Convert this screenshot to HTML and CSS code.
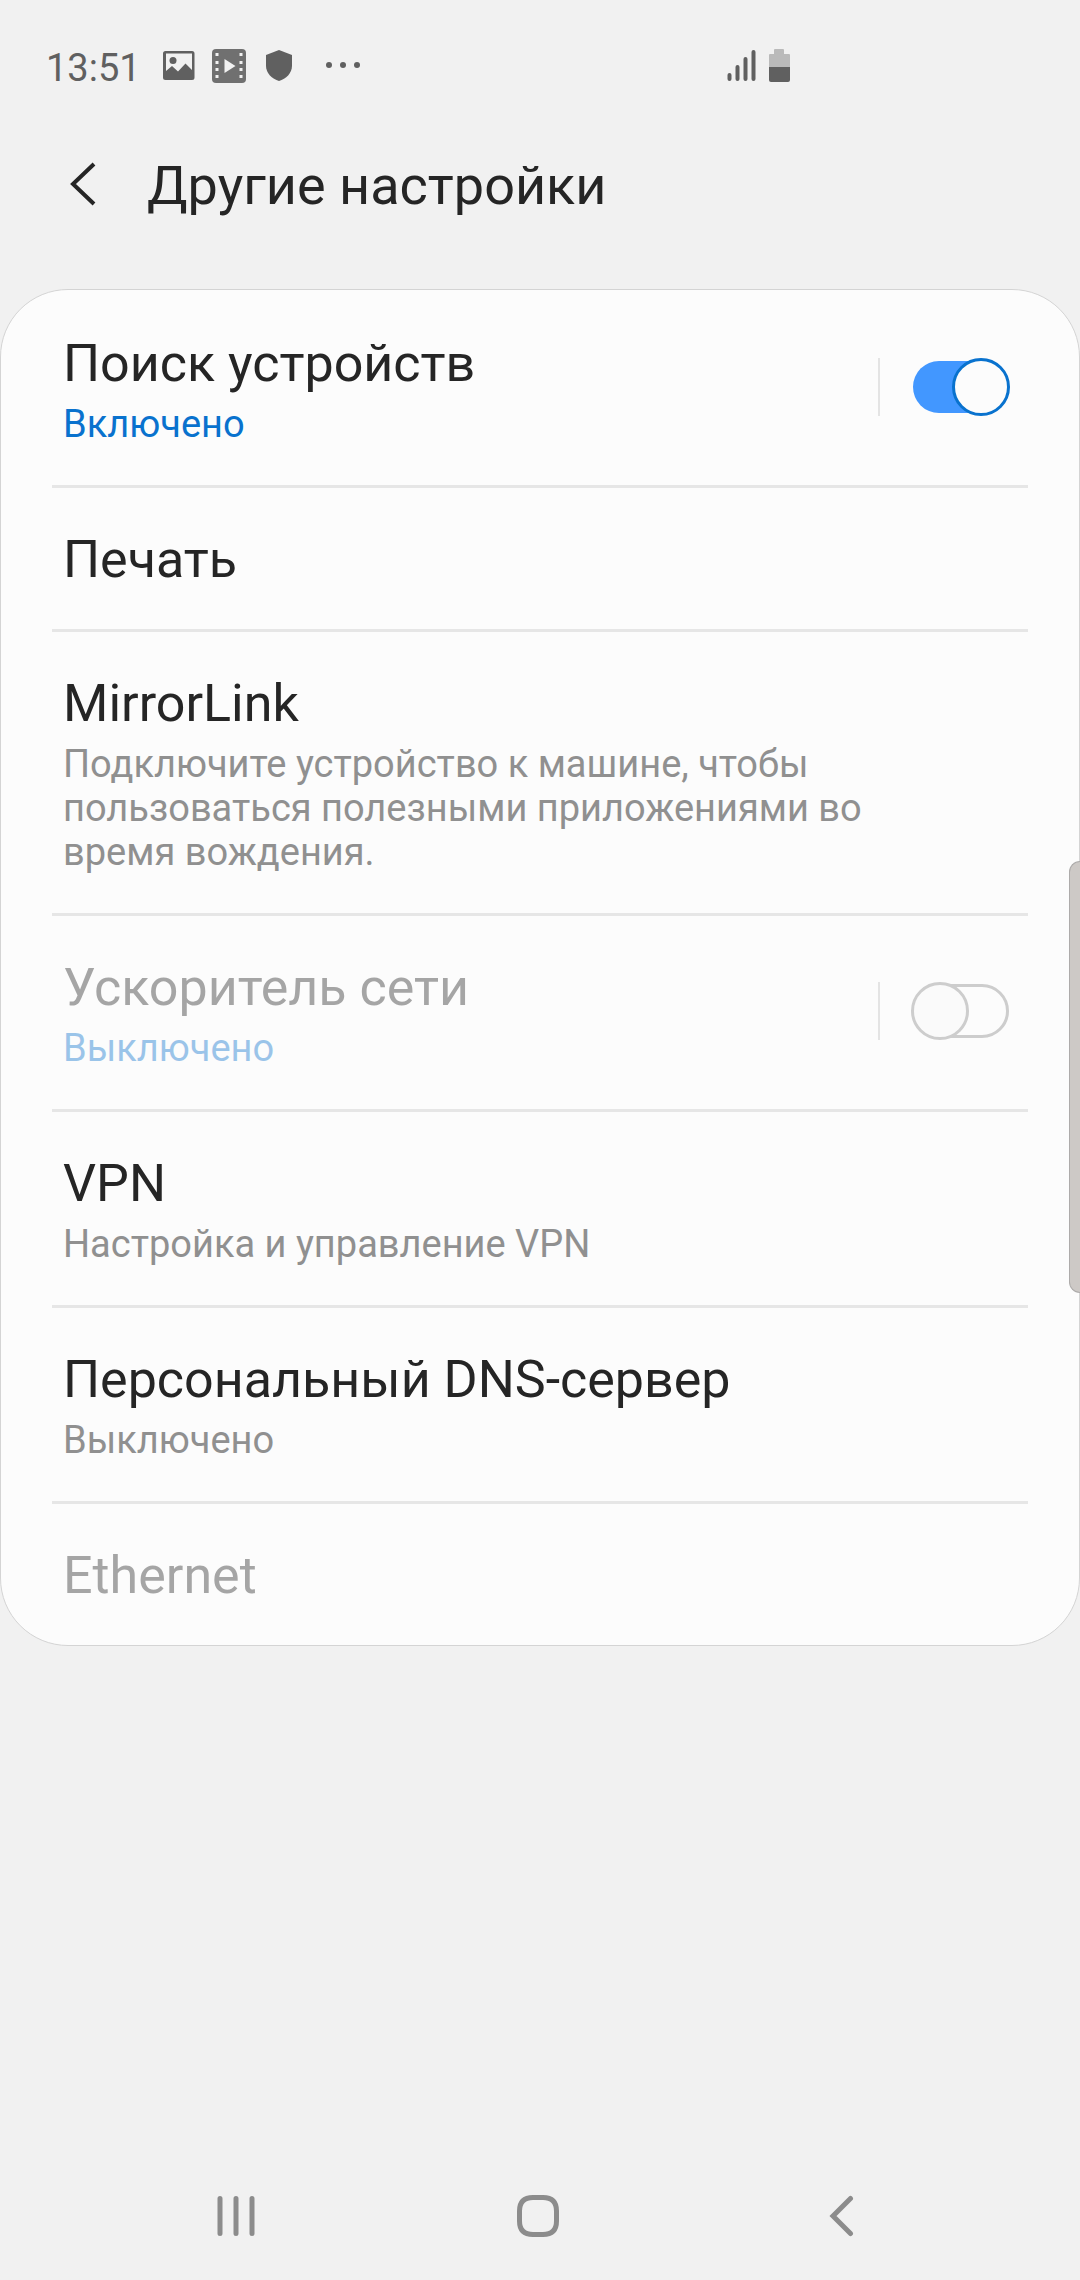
FILE: index.html
```html
<!DOCTYPE html>
<html lang="ru">
<head>
    <meta charset="utf-8">
    <meta name="viewport" content="width=device-width, initial-scale=1">
    <title>Другие настройки</title>
    <link rel="stylesheet" href="styles.css">
</head>
<body>
<div class="status">
    <span class="clock">13:51</span>
    <div class="status-icons">
        <svg width="34" height="34" viewBox="0 0 34 34">
            <path fill-rule="evenodd" d="M3.500 2h26.500a2.500 2.500 0 0 1 2.500 2.500v24a2.500 2.500 0 0 1-2.500 2.500H3.500a2.500 2.500 0 0 1-2.500-2.500v-24A2.500 2.500 0 0 1 3.500 2zM4 4.500V22l6-5 6 5.500 7.500-8L30 21V4.500z"/>
            <circle cx="11" cy="11.500" r="3.500"/>
        </svg>
        <svg class="video" width="34" height="34" viewBox="0 0 34 34">
            <rect width="34" height="34" rx="4"/>
            <path class="hole" d="M12.500 10v14L23.500 17zM3.500 4h3v3h-3zM3.500 12h3v3h-3zM3.500 19h3v3h-3zM3.500 26h3v3h-3zM27.500 4h3v3h-3zM27.500 12h3v3h-3zM27.500 19h3v3h-3zM27.500 26h3v3h-3z"/>
        </svg>
        <svg width="34" height="34" viewBox="0 0 34 34">
            <path d="M17 1l13 5v11c0 7-6 13-13 15C10 30 4 24 4 17V6z"/>
        </svg>
        <svg width="50" height="34" viewBox="0 0 50 34">
            <circle cx="17" cy="16" r="3"/>
            <circle cx="31" cy="16" r="3"/>
            <circle cx="45" cy="16" r="3"/>
        </svg>
    </div>
    <div class="status-signal">
        <svg width="29" height="34" viewBox="0 0 29 34">
            <path class="bars" d="M2.500 26v4M10.500 18v12M18.500 10v20M26.500 3v27"/>
        </svg>
        <svg width="21" height="34" viewBox="0 0 21 34">
            <path class="battery-empty" d="M0 18V6q0-1 1-1h4V1q0-1 1-1h8q1 0 1 1v4h5q1 0 1 1v12z"/>
            <path d="M0 18h21v13q0 2-2 2H2q-2 0-2-2z"/>
        </svg>
    </div>
</div>

<header class="header">
    <button class="back" type="button" aria-label="Назад">
        <svg width="50" height="50" viewBox="0 0 50 50">
            <path d="M36 3L15 23L36 43"/>
        </svg>
    </button>
    <h1>Другие настройки</h1>
</header>

<main>
    <ul class="list">
        <li class="row">
            <label class="text" for="nearby">
                <span class="title">Поиск устройств</span>
                <span class="summary state">Включено</span>
            </label>
            <div class="toggle">
                <input type="checkbox" class="switch" id="nearby" checked>
            </div>
        </li>
        <li class="row">
            <a class="text" href="#print">
                <span class="title">Печать</span>
            </a>
        </li>
        <li class="row">
            <a class="text" href="#mirrorlink">
                <span class="title">MirrorLink</span>
                <span class="summary">Подключите устройство к машине, чтобы пользоваться полезными приложениями во время вождения.</span>
            </a>
        </li>
        <li class="row disabled">
            <label class="text" for="booster">
                <span class="title">Ускоритель сети</span>
                <span class="summary state">Выключено</span>
            </label>
            <div class="toggle">
                <input type="checkbox" class="switch" id="booster" disabled>
            </div>
        </li>
        <li class="row">
            <a class="text" href="#vpn">
                <span class="title">VPN</span>
                <span class="summary">Настройка и управление VPN</span>
            </a>
        </li>
        <li class="row">
            <a class="text" href="#dns">
                <span class="title">Персональный DNS-сервер</span>
                <span class="summary">Выключено</span>
            </a>
        </li>
        <li class="row disabled">
            <a class="text" href="#ethernet" aria-disabled="true">
                <span class="title">Ethernet</span>
            </a>
        </li>
    </ul>
</main>

<div class="edge-handle"></div>

<nav class="nav">
    <button type="button" aria-label="Последние">
        <svg width="42" height="42" viewBox="0 0 42 42">
            <path d="M5 3.500v35M21 3.500v35M37 3.500v35"/>
        </svg>
    </button>
    <button type="button" aria-label="Главный экран">
        <svg width="42" height="42" viewBox="0 0 42 42">
            <path d="M16 2.500h10Q39.500 2.500 39.500 16v10Q39.500 39.500 26 39.500H16Q2.500 39.500 2.500 26V16Q2.500 2.500 16 2.500z"/>
        </svg>
    </button>
    <button type="button" aria-label="Назад">
        <svg width="42" height="42" viewBox="0 0 42 42">
            <path d="M30.500 3.500L13 21L30.500 38.500"/>
        </svg>
    </button>
</nav>
</body>
</html>
```
FILE: styles.css
```css
*,
*::before,
*::after {
    box-sizing: border-box;
}

body {
    display: flex;
    flex-direction: column;
    min-height: 100vh;
    margin: 0;
    background: #f1f1f1;
    color: #252525;
    font-family: Roboto, "Noto Sans", sans-serif;
}

svg {
    display: block;
}

button {
    padding: 0;
    border: 0;
    background: none;
}

/* status bar */
.status {
    display: flex;
    align-items: flex-end;
    padding: 49px 290px 47px 46px;
    color: #606060;
    fill: #606060;
}

.clock {
    font-size: 38px;
    line-height: 30px;
}

.status-icons {
    display: flex;
    gap: 16px;
    margin-left: 21px;
}

.video {
    fill: #707070;
}

.hole {
    fill: #f1f1f1;
}

.status-signal {
    display: flex;
    gap: 13px;
    margin-left: auto;
}

.bars {
    stroke: #606060;
    stroke-width: 4;
    stroke-linecap: round;
}

.battery-empty {
    fill: #bababa;
}

/* title bar */
.header {
    display: flex;
    align-items: center;
    gap: 39px;
    height: 111px;
    margin-bottom: 48px;
    padding: 0 58px;
}

.back svg {
    fill: none;
    stroke: #252525;
    stroke-width: 4;
}

h1 {
    margin: 0;
    font-size: 54px;
    font-weight: 400;
    line-height: 64px;
}

main {
    flex: 1;
}

.list {
    margin: 0;
    padding: 2px 51px 0;
    list-style: none;
    background: #fcfcfc;
    border: 1px solid #d4d4d4;
    border-radius: 68px;
}

.row {
    display: flex;
    align-items: center;
    padding: 0 18px 0 11px;
}

.row + .row {
    border-top: 3px solid #e6e6e6;
}

.text {
    flex: 1;
    padding: 41px 0 39px;
    color: inherit;
    text-decoration: none;
}

.title {
    display: block;
    font-size: 52px;
    line-height: 61px;
}

.summary {
    display: block;
    max-width: 85%;
    margin-top: 8px;
    color: #909090;
    font-size: 38px;
    line-height: 44px;
}

.state {
    color: #0972ce;
}

.disabled .text {
    opacity: 0.4;
}

/* switch */
.toggle {
    display: flex;
    margin-bottom: 4px;
    padding-left: 31px;
    border-left: 2px solid #e4e4e4;
}

.switch {
    appearance: none;
    position: relative;
    width: 99px;
    height: 58px;
    margin: 0;
}

.switch::before,
.switch::after {
    content: "";
    position: absolute;
    border: 3px solid #cdcdcd;
    border-radius: 29px;
}

.switch::before {
    inset: 2px 1px 2px 2px;
}

.switch::after {
    top: 0;
    left: 0;
    width: 58px;
    height: 58px;
    background: #fafafa;
}

.switch:checked::before {
    border: 0;
    inset: 3px 2px;
    background: #4297ff;
}

.switch:checked::after {
    left: auto;
    right: 0;
    background: #fcfcfc;
    border-color: #0972ce;
}

.edge-handle {
    position: fixed;
    top: 861px;
    right: 0;
    width: 11px;
    height: 432px;
    background: #cdc9c6;
    border: 1px solid #adabaa;
    border-right: 0;
    border-radius: 14px 0 0 14px;
}

/* navigation bar */
.nav {
    display: flex;
    height: 128px;
    padding: 0 88px 0 85px;
}

.nav button {
    display: flex;
    flex: 1;
    align-items: center;
    justify-content: center;
}

.nav svg {
    fill: none;
    stroke: #8c8c8c;
    stroke-width: 5;
    stroke-linecap: round;
}
```
